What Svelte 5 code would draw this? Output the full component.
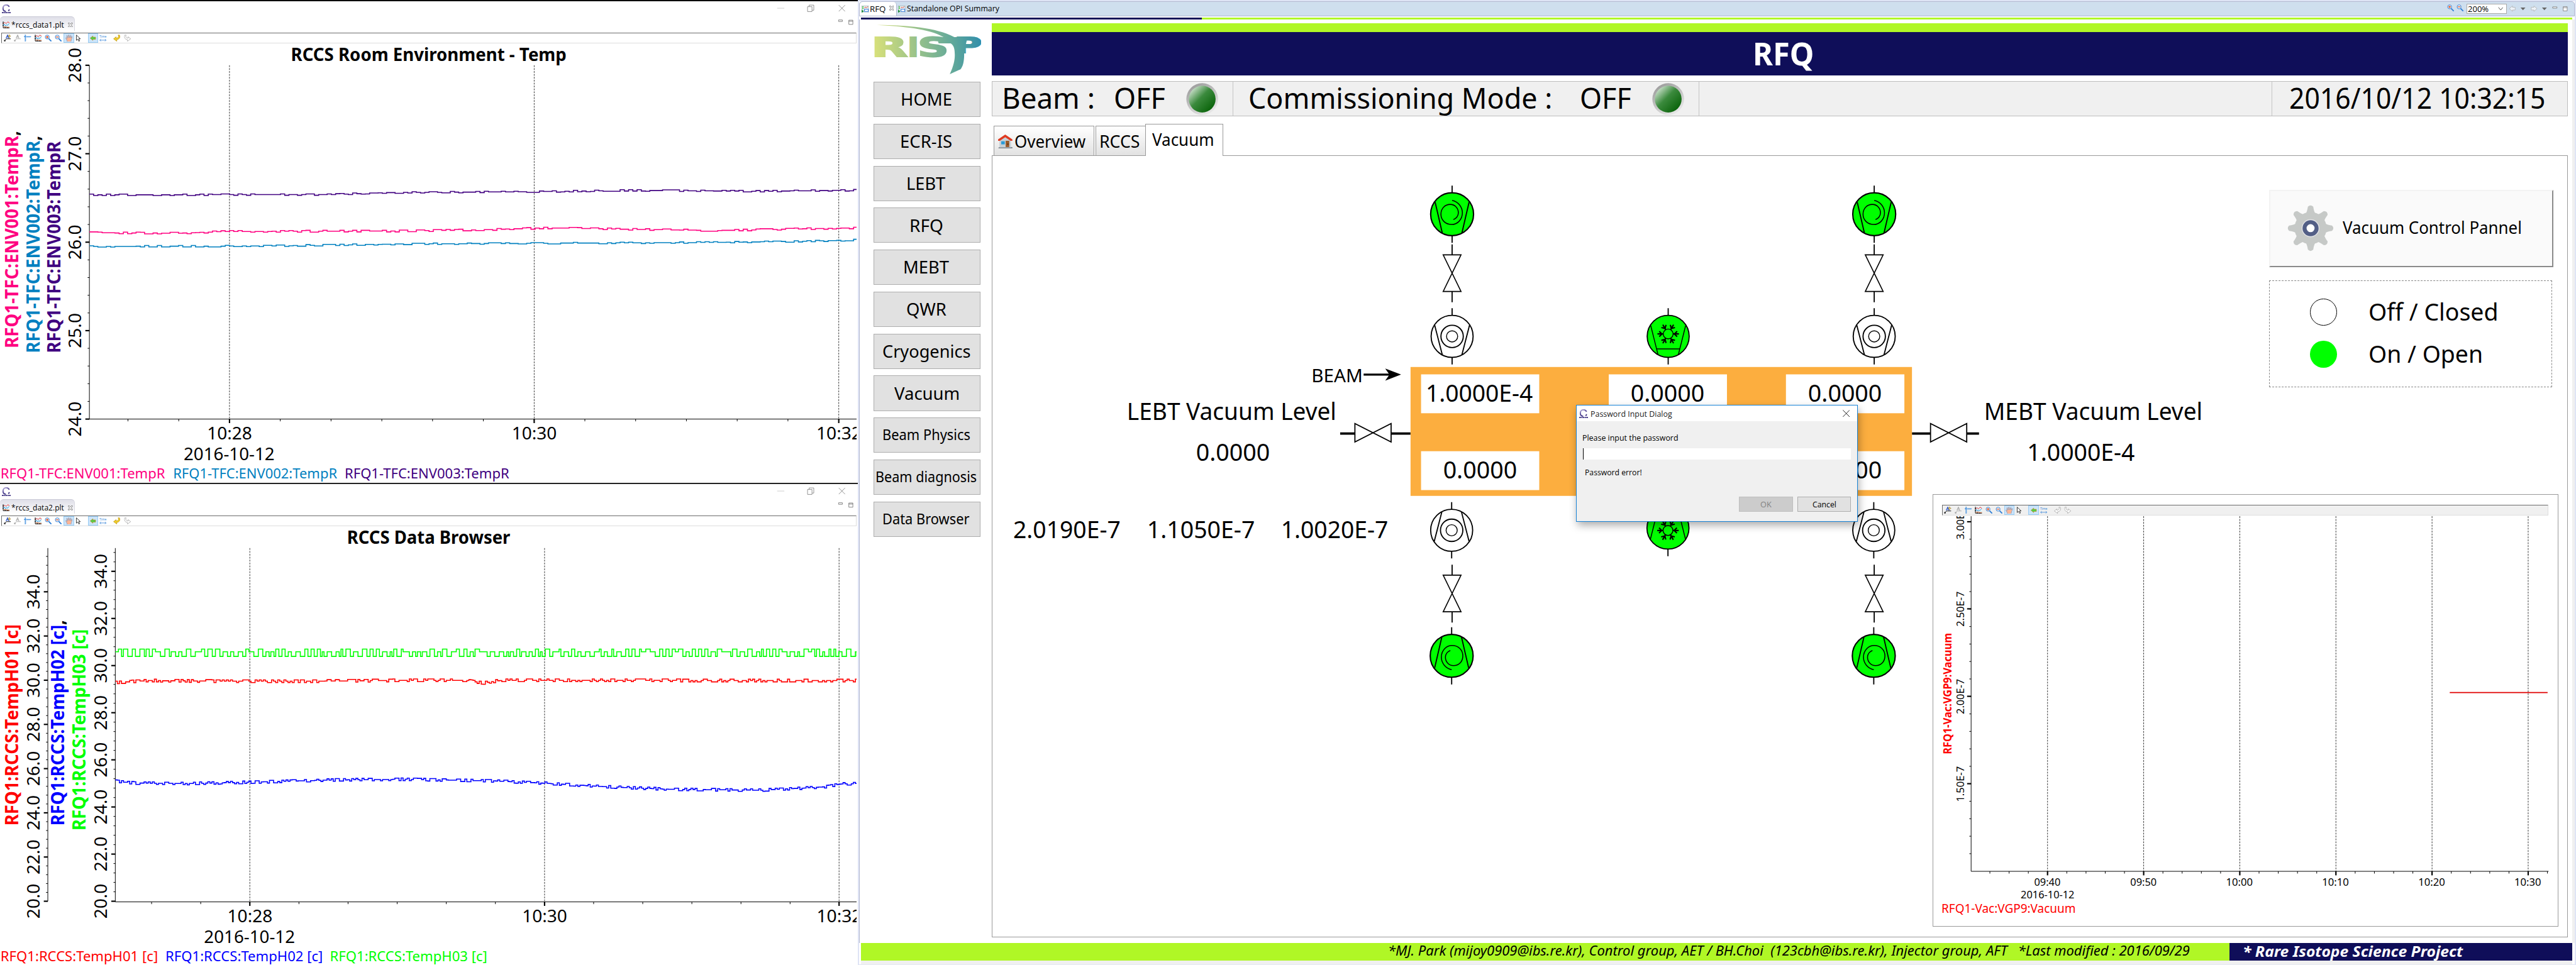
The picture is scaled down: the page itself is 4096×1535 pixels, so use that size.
<script>
  // Scales a label's glyphs horizontally so that its ink covers the width w.
  function fit(node, opts) {
    const cs = getComputedStyle(node);
    const ctx = document.createElement('canvas').getContext('2d');
    ctx.font = `${cs.fontStyle} ${cs.fontWeight} 100px ${cs.fontFamily}`;
    const m = ctx.measureText(node.textContent);
    const k = opts.size / 100;
    const ink = (m.actualBoundingBoxLeft + m.actualBoundingBoxRight) * k;
    const ratio = opts.w / ink;
    const left = m.actualBoundingBoxLeft * k * ratio;
    node.style.fontSize = `${opts.size}px`;
    if (opts.x === undefined) {
      node.style.transformOrigin = '0 50%';
      node.style.transform = `scaleX(${ratio})`;
      node.style.marginLeft = `${left}px`;
      node.style.marginRight = `${opts.w - m.width * k - left}px`;
    } else {
      node.setAttribute('x', String(opts.x + left));
      node.setAttribute('textLength', String(m.width * k * ratio));
      node.setAttribute('lengthAdjust', 'spacingAndGlyphs');
    }
  }

  function rng(seed) {
    let s = seed;
    return () => {
      s = (s * 1664525 + 1013904223) % 4294967296;
      return s / 4294967296;
    };
  }

  // Stepped trace through control points, with jitter in whole quanta.
  function trace(points, step, quantum, spread, seed, x1 = 1917) {
    const r = rng(seed);
    let x = points[0][0];
    let d = '';
    let i = 0;
    while (x < x1) {
      while (i < points.length - 2 && points[i + 1][0] < x) i++;
      const [ax, ay] = points[i];
      const [bx, by] = points[i + 1];
      const base = ay + ((by - ay) * (x - ax)) / (bx - ax);
      const j = Math.round((r() * 2 - 1) * spread) * quantum;
      const y = Math.round((base + j) * 2) / 2;
      d += d ? `V${y}` : `M${x} ${y}`;
      x = Math.min(x + step, x1);
      d += `H${x}`;
    }
    return d;
  }

  function square(x0, x1, levels, seed) {
    const r = rng(seed);
    let x = x0;
    let hi = false;
    let d = `M${x0} ${levels[1]}`;
    while (x < x1) {
      x = Math.min(x + (r() < 0.6 ? 7 : r() < 0.6 ? 10 : 4), x1);
      hi = !hi;
      const y = hi ? (r() < 0.55 ? levels[0] : levels[1]) : r() < 0.85 ? levels[2] : levels[1];
      d += `H${x}V${y}`;
    }
    return d;
  }

  const range = (n) => Array.from({ length: n }, (_, i) => i);

  const env = {
    tab: '*rccs_data1.plt',
    title: 'RCCS Room Environment - Temp',
    titleX: 654,
    titleW: 612,
    axes: [{ x: 200, top: 147.4, bottom: 939, base: 939, minor: 39.6, labelX: 181, labels: ['24.0', '25.0', '26.0', '27.0', '28.0'] }],
    names: [
      { x: 41, y: 777, w: 481, s: 'RFQ1-TFC:ENV001:TempR', comma: true, c: '#ff0080' },
      { x: 88, y: 788, w: 481, s: 'RFQ1-TFC:ENV002:TempR', comma: true, c: '#0080c0' },
      { x: 135, y: 788, w: 471, s: 'RFQ1-TFC:ENV003:TempR', comma: false, c: '#400080' }
    ],
    x0: 200,
    major: [513.5, 1195.3, 1876.8],
    minor: 113.6,
    legend: [
      { x: 4, w: 365, s: 'RFQ1-TFC:ENV001:TempR', c: '#ff0080' },
      { x: 390, w: 364, s: 'RFQ1-TFC:ENV002:TempR', c: '#0080c0' },
      { x: 774, w: 365, s: 'RFQ1-TFC:ENV003:TempR', c: '#400080' }
    ],
    lines: [
      { c: '#400080', d: trace([[200, 437], [740, 436.5], [860, 432], [1195, 430], [1400, 427], [1700, 429], [1917, 426.5]], 9.5, 1.5, 1.1, 7) },
      { c: '#ff0080', d: trace([[200, 522], [400, 523], [500, 519], [900, 518], [1090, 515], [1220, 511], [1400, 514], [1600, 517], [1800, 513], [1917, 511]], 9.5, 1.8, 1.2, 21) },
      { c: '#0080c0', d: trace([[200, 552.5], [600, 551.5], [900, 547], [1200, 545.5], [1600, 543.5], [1800, 541], [1917, 538]], 9.5, 1.5, 1.1, 35) }
    ]
  };

  const data = {
    tab: '*rccs_data2.plt',
    title: 'RCCS Data Browser',
    titleX: 779.5,
    titleW: 362,
    axes: [
      { x: 107, top: 147, bottom: 937.5, base: 937.5, minor: 19.79, labelX: 88, labels: ['20.0', '22.0', '24.0', '26.0', '28.0', '30.0', '32.0', '34.0'] },
      { x: 258, top: 147, bottom: 939, base: 937.5, minor: 21.1, labelX: 239, labels: ['20.0', '22.0', '24.0', '26.0', '28.0', '30.0', '32.0', '34.0'] }
    ],
    names: [
      { x: 41, y: 765, w: 445, s: 'RFQ1:RCCS:TempH01 [c]', comma: false, c: '#ff0000' },
      { x: 144, y: 765, w: 455, s: 'RFQ1:RCCS:TempH02 [c]', comma: true, c: '#0000ff' },
      { x: 191, y: 776, w: 445, s: 'RFQ1:RCCS:TempH03 [c]', comma: false, c: '#00ff00' }
    ],
    x0: 258,
    major: [559, 1218.5, 1877.5],
    minor: 109.9,
    legend: [
      { x: 4, w: 347, s: 'RFQ1:RCCS:TempH01 [c]', c: '#ff0000' },
      { x: 373, w: 347, s: 'RFQ1:RCCS:TempH02 [c]', c: '#0000ff' },
      { x: 741, w: 347, s: 'RFQ1:RCCS:TempH03 [c]', c: '#00ff00' }
    ],
    lines: [
      { c: '#00ff00', d: square(258, 1917, [373, 379, 389.5], 11) },
      { c: '#ff0000', d: trace([[258, 448], [330, 443.5], [500, 445], [700, 445], [900, 443], [1040, 443], [1080, 449], [1120, 443], [1917, 443.5]], 4.6, 3, 1.2, 5) },
      { c: '#0000ff', d: trace([[258, 669], [300, 673], [420, 674], [560, 671], [750, 666], [900, 664.5], [1100, 668], [1220, 673.5], [1350, 681], [1500, 687], [1700, 689], [1800, 684], [1850, 681], [1880, 675], [1917, 674]], 4.6, 2.8, 1.1, 9) }
    ]
  };

  const nav = [
    { s: 'HOME', w: 110, f: 39.5 },
    { s: 'ECR-IS', w: 112, f: 39.5 },
    { s: 'LEBT', w: 84, f: 39.5 },
    { s: 'RFQ', w: 70, f: 39.5 },
    { s: 'MEBT', w: 99, f: 39.5 },
    { s: 'QWR', w: 87, f: 39.5 },
    { s: 'Cryogenics', w: 194, f: 39.5 },
    { s: 'Vacuum', w: 144, f: 39.5 },
    { s: 'Beam Physics', w: 193, f: 32.5 },
    { s: 'Beam diagnosis', w: 223, f: 32.5 },
    { s: 'Data Browser', w: 192, f: 32.5 }
  ];

  const vacTicks = ['09:40', '09:50', '10:00', '10:10', '10:20', '10:30'];
  const vacLevels = [
    { s: '2.50E-7', y: 1362.4 },
    { s: '2.00E-7', y: 1558.2 },
    { s: '1.50E-7', y: 1753.8 }
  ];
</script>

{#snippet txt(x, y, s, w, size, cls = '', fill = '#000')}
  <text {y} class={cls} {fill} use:fit={{ w, x, size }}>{s}</text>
{/snippet}

{#snippet vtxt(x, y, s, w, size, cls = '', fill = '#000', comma = false)}
  <text transform={`translate(${x} ${y}) rotate(-90)`} class={cls} {fill} use:fit={{ w, x: 0, size }}>{s}{#if comma}<tspan fill="#000">,</tspan>{/if}</text>
{/snippet}

{#snippet cssLogo()}
  <svg class="clogo" viewBox="0 0 20 20">
    <defs>
      <linearGradient id="cg" x1="0" y1="0" x2="0.5" y2="1">
        <stop offset="0" stop-color="#c3bce2" /><stop offset="0.5" stop-color="#5b4f9c" /><stop offset="1" stop-color="#3b2f80" />
      </linearGradient>
    </defs>
    <path d="M16.5 5.5C15 2 12.500 1 10 1C5.500 1 2.500 4 2.500 8.500C2.500 12.500 5 15.500 9 15.700M14.500 14.500L17 11.500" fill="none" stroke="url(#cg)" stroke-width="2.600" />
    <path d="M0 18.500H20" stroke="#3b2f80" stroke-width="2.600" stroke-dasharray="4 .8 2.500 .6" />
  </svg>
{/snippet}

{#snippet pltIcon()}
  <svg class="i16" viewBox="0 0 16 16">
    <rect x="1" y="1" width="15" height="13" fill="#dff6fb" />
    <path d="M1.500 0V14.500H16M0 4H3M0 9H3M6 13V16M11 13V16" stroke="#000" stroke-width="1.300" fill="none" />
    <path d="M2 5L5 2L8 5L12 1L16 4" stroke="#f00" fill="none" stroke-width="1.200" />
    <path d="M2 9L4 6.500L7 10L9 7.500L11 9L15 5" stroke="#1a7fd0" fill="none" stroke-width="1.200" />
    <path d="M2 12.500L7 12L11 13H16" stroke="#e05a20" fill="none" stroke-width="1.300" />
  </svg>
{/snippet}

{#snippet magnifier(plus)}
  <svg class="i16" viewBox="0 0 16 16">
    <path d="M9 9L15 15" stroke="#2f7fd6" stroke-width="2.600" />
    <circle cx="5.800" cy="5.500" r="4.500" fill="#e3f2ff" stroke="#3a7fd0" stroke-width="1.300" />
    <path d={plus ? 'M3 5.500H8.600M5.800 2.700V8.300' : 'M3 5.500H8.600'} stroke="#e8501c" stroke-width="1.700" />
  </svg>
{/snippet}

{#snippet annotate(live)}
  <svg class="i16" viewBox="0 0 16 16">
    <path d="M2 13.500L6 9.500H16" stroke={live ? '#000' : '#aaa'} fill="none" stroke-width="1.300" />
    <circle cx="2.200" cy="13.600" r="1.900" fill={live ? '#333' : '#aaa'} />
    <path d="M5 8.500L8.500 0.500L11.500 8.500M6.500 5.500H10.500" stroke={live ? '#1f4fd0' : '#aaa'} fill="none" stroke-width="1.500" />
    {#if live}<path d="M12.500 0L13.500 2.500L16 3.500L13.500 4.500L12.500 7L11.500 4.500L9 3.500L11.500 2.500Z" fill="#f6d878" stroke="#8a6a10" stroke-width=".8" />{/if}
  </svg>
{/snippet}

{#snippet undo(live, flip)}
  <svg class="i16" class:flip viewBox="0 0 16 16">
    <path d="M14 1C16 5 15 10 8 11.500V15L0.800 9.500L6.500 5V8C11 7.500 13 5 11 1Z" fill={live ? '#f2cf2a' : '#fff'} stroke={live ? '#b8900c' : '#999'} stroke-width="1" />
  </svg>
{/snippet}

{#snippet tools(live)}
  <span class="tool">{@render annotate(true)}</span>
  <span class="tool">{@render annotate(false)}</span>
  <span class="tool"><svg class="i16" viewBox="0 0 16 16"><path d="M3 0V16M0 4.500H16" stroke="#1a78d8" stroke-width="1.500" /><path d="M5 6.500H15M5 1V15" stroke="#bcd8f2" stroke-width="1" /></svg></span>
  <span class="tool">{@render pltIcon()}</span>
  <span class="tool">{@render magnifier(true)}</span>
  <span class="tool">{@render magnifier(false)}</span>
  <span class="tool on"><svg class="i16" viewBox="0 0 16 16"><path d="M4 16L3 12L0.500 8C0 7 1.500 6.500 2.500 7.500L4 9L2.500 3C2.500 1.500 4.200 1.500 4.600 3L6 7L6.500 1.500C6.500 0 8.500 0 8.600 1.500L9 7L11 2C11.500 .8 13 1.500 12.700 2.600L12 7.500L14 4.500C15 3.500 16 4.500 15.600 5.600L13.500 11L12.500 16Z" fill="#fdb595" stroke="#3f7fc0" stroke-width="1" stroke-dasharray="1.600 1" /></svg></span>
  <span class="tool"><svg class="i16" viewBox="0 0 16 16"><path d="M2 1V13L5 10.300L7.500 15L9.500 14L7.200 9.500H11Z" fill="#fff" stroke="#000" stroke-width="1.100" /></svg></span>
  <span class="tool on sep"><svg class="i16" viewBox="0 0 16 16"><path d="M2 8L8 3.200V5.800H14V10.600H8V13Z" fill="#52cf4a" stroke="#c08a20" stroke-width="1" /></svg></span>
  <span class="tool"><svg class="i16 loose" viewBox="0 0 16 16"><text x="0" y="6.500" class="time" textLength="16" lengthAdjust="spacingAndGlyphs">Time</text><path d="M1 12.500H15M3.500 10L1 12.500L3.500 15M12.500 10L15 12.500L12.500 15" stroke="#2f7fd6" fill="none" stroke-width="1.100" /></svg></span>
  <span class="tool sep">{@render undo(live, false)}</span>
  <span class="tool">{@render undo(false, true)}</span>
{/snippet}

{#snippet closeX()}
  <svg class="closex" viewBox="0 0 11 11"><path d="M1 0.800H3.200L5.500 3.500L7.800 0.800H10V2.500L7.300 5.500L10 8.500V10.200H7.800L5.500 7.500L3.200 10.200H1V8.500L3.700 5.500L1 2.500Z" fill="#fff" stroke="#555" stroke-width="1" /></svg>
{/snippet}

{#snippet plotWindow(p)}
  <section class="win">
    <header class="wtitle">
      {@render cssLogo()}
      <svg class="wctl" viewBox="0 0 160 20" fill="none">
        <path d="M1 10H17" stroke="#bbb" />
        <path d="M69 6.500H79V17.500H69ZM72.500 6V3H83V14.500H79.500" stroke="#777" stroke-width="1.100" />
        <path d="M139 3L153 17M153 3L139 17" stroke="#777" stroke-width="1.100" />
      </svg>
    </header>
    <div class="wtabs">
      <div class="wtab">{@render pltIcon()}<span class="ui" use:fit={{ w: 117, size: 19 }}>{p.tab}</span>{@render closeX()}</div>
      <svg class="vctl" viewBox="0 0 36 14" fill="none" stroke="#555">
        <path d="M.5 1H9V4.500H.5ZM23.500 1.500H32.500V11H23.500ZM23.500 4H32.500" />
      </svg>
    </div>
    <div class="tools">{@render tools(true)}</div>
    <svg class="plot" viewBox="0 98 1917 981">
      {@render txt(p.titleX, 137, p.title, p.titleW, 39, 'b')}
      {#each p.major as x}
        <path d={`M${x} 147V939`} class="grid" />
      {/each}
      {#each p.axes as a}
        <path d={`M${a.x} ${a.top}V${a.bottom}`} class="axis" />
        {#each range(Math.floor((a.base - 146) / a.minor) + 1) as i}
          <path d={`M${a.x} ${a.base - i * a.minor}h-4`} class="minor" />
        {/each}
        {#each a.labels as s, i}
          <path d={`M${a.x} ${a.base - i * a.minor * 5}h-9`} class="major" />
          {@render vtxt(a.labelX, a.base - i * a.minor * 5 + 37.5, s, 75, 39)}
        {/each}
      {/each}
      {#each p.names as n}
        {@render vtxt(n.x, n.y, n.s, n.w, 39.5, 'b', n.c, n.comma)}
      {/each}
      <path d={`M${p.x0} 939H1917`} class="axis" />
      {#each range(16) as i}
        {#if p.major[0] + (i - 3) * p.minor > p.x0 && p.major[0] + (i - 3) * p.minor < 1917}
          <path d={`M${p.major[0] + (i - 3) * p.minor} 939v5`} class="minor" />
        {/if}
      {/each}
      {#each p.major as x, i}
        <path d={`M${x} 939v9`} class="major" />
        {@render txt(x - 47, 985, ['10:28', '10:30', '10:32'][i], 96, 39)}
      {/each}
      {@render txt(p.major[0] - 101, 1031, '2016-10-12', 200, 39)}
      {#each p.legend as l}
        {@render txt(l.x, 1072.5, l.s, l.w, 31, '', l.c)}
      {/each}
      {#each p.lines as l}
        <path d={l.d} fill="none" stroke={l.c} stroke-width="2.200" />
      {/each}
    </svg>
  </section>
{/snippet}

{#snippet scrollPump(x, y, rot, top, bottom)}
  <g transform={`translate(${x} ${y}) rotate(${rot})`} class="sym">
    <path d={`M0 ${-top}V-48M0 48V${bottom}`} />
    <circle r="48" fill="#0f0" stroke-width="3" />
    <path d="M-38 -27L-22 42M38 -27L22 42" />
    <path d="M0 -31C14 -28 23 -16 23 -3C23 12 12 23 -1 23C-15 23 -25 13 -25 0C-25 -13 -16 -22 -4 -22C6 -22 14 -14 14 -3C14 4 9 10 3 12" stroke-width="2.200" />
  </g>
{/snippet}

{#snippet turboPump(x, y, rot)}
  <g transform={`translate(${x} ${y}) rotate(${rot})`} class="sym">
    <path d="M0 -63V-47M0 47V63" />
    <circle r="47" fill="#fff" />
    <path d="M-39 -25L-22 41M39 -25L22 41" />
    <circle r="25" /><circle r="12.500" stroke-width="2" />
  </g>
{/snippet}

{#snippet cryoPump(x, y, rot)}
  <g transform={`translate(${x} ${y}) rotate(${rot})`} class="sym">
    <path d="M0 -63V-47M0 47V63" />
    <circle r="47" fill="#0f0" />
    <path d="M-39 -24L-23 40M39 -24L23 40M-26 28H26" stroke-width="2" />
    <g transform="translate(0 -5.500)">
      <circle r="11" stroke-width="2" />
      {#each range(6) as i}
        <path transform={`rotate(${i * 60})`} d="M11 0H24M20 -6L14 0L20 6" stroke-width="3" />
      {/each}
    </g>
  </g>
{/snippet}

{#snippet valve(x, y)}
  <g transform={`translate(${x} ${y})`} class="sym">
    <path d="M0 -64.500V-41M0 41V65" />
    <path d="M-20 -41H20L-20 41H20Z" fill="#fff" stroke-width="2.300" />
  </g>
{/snippet}

{#snippet opiIcon()}
  <svg class="i16" viewBox="0 0 16 16">
    <rect x=".5" y=".5" width="15" height="15" fill="#eef3f8" stroke="#9aa" />
    <path d="M6 6L8.500 3L10.500 5L14 2" stroke="#e0402a" fill="none" stroke-width="1.300" />
    <circle cx="3" cy="3" r="1.200" fill="#0b0" /><circle cx="3" cy="6.500" r="1.200" fill="#0b0" />
    <rect x="6.500" y="8" width="8.500" height="5" fill="#fff" stroke="#1f6fd8" stroke-width="1.300" />
    <path d="M0 9L5.500 12.500L0 16Z" fill="#1c8a3c" />
  </svg>
{/snippet}

{#snippet led()}
  <svg class="led" viewBox="-36 -36 72 72">
    <defs>
      <linearGradient id="rim" x1=".2" y1="0" x2=".8" y2="1"><stop offset="0" stop-color="#9a9a9a" /><stop offset="1" stop-color="#ededed" /></linearGradient>
      <linearGradient id="bulb" x1=".12" y1=".12" x2=".85" y2=".85"><stop offset="0" stop-color="#c9dfca" /><stop offset=".45" stop-color="#3b8a3d" /><stop offset="1" stop-color="#0c650c" /></linearGradient>
    </defs>
    <circle r="35.500" fill="url(#rim)" /><circle r="30" fill="url(#bulb)" />
  </svg>
{/snippet}

<div class="screen">
  <div class="left">
    {@render plotWindow(env)}
    {@render plotWindow(data)}
  </div>

  <main class="opi">
    <div class="tabbar">
      <div class="etab active">{@render opiIcon()}<span class="ui" use:fit={{ w: 33, size: 19 }}>RFQ</span>{@render closeX()}</div>
      <div class="etab">{@render opiIcon()}<span class="ui" use:fit={{ w: 206, size: 19 }}>Standalone OPI Summary</span></div>
      <div class="etools">
        <span class="zm">{@render magnifier(true)}</span>
        <span class="zm">{@render magnifier(false)}</span>
        <div class="combo"><span class="ui" use:fit={{ w: 45, size: 18 }}>200%</span><svg viewBox="0 0 12 8"><path d="M1 1L6 7L11 1" fill="none" stroke="#444" stroke-width="1.300" /></svg></div>
        <svg class="nav-arrows" viewBox="5616 6 136 20" fill="#eef3f8" stroke="#aaa">
          <path d="M5616 15.500L5623 9.500V12.500H5629V18.500H5623V21.500ZM5678 15.500L5671 9.500V12.500H5665V18.500H5671V21.500Z" />
          <path d="M5641 13H5652L5646.500 19ZM5689 13H5700L5694.500 19Z" fill="#666" stroke="none" />
          <path d="M5713 11.500H5722.500V14.500H5713ZM5736.500 11H5745.500V20.500H5736.500ZM5736.500 13.500H5745.500" fill="#fff" stroke="#666" />
        </svg>
      </div>
    </div>
    <div class="progress"><span></span></div>

    <div class="body">
      <nav class="side">
        <svg class="risp" viewBox="1953 52 242 116">
          <defs>
            <linearGradient id="rg" gradientUnits="userSpaceOnUse" x1="1953" y1="105" x2="2193" y2="90">
              <stop offset="0" stop-color="#d9e17a" /><stop offset=".5" stop-color="#8abb8e" /><stop offset=".75" stop-color="#5fa79b" /><stop offset="1" stop-color="#338fa9" />
            </linearGradient>
          </defs>
          <g fill="url(#rg)" class="mark">
            <text x="1949" y="127" textLength="82" lengthAdjust="spacingAndGlyphs">R</text>
            <text x="2030" y="127" textLength="26" lengthAdjust="spacingAndGlyphs">I</text>
            <text x="2053" y="127" textLength="70" lengthAdjust="spacingAndGlyphs">S</text>
            <text x="2135" y="118" textLength="62" lengthAdjust="spacingAndGlyphs" class="p">P</text>
            <path d="M1962 56C2030 56 2095 62 2135 83H2165L2157 114C2158 135 2155 148 2149 155L2125 166C2135 145 2137 130 2136 118C2136 105 2131 99 2127 97H2100L2096 83H2111C2080 65 2020 59 1962 56Z" />
          </g>
        </svg>
        {#each nav as b}
          <button class="navb"><span use:fit={{ w: b.w, size: b.f }}>{b.s}</span></button>
        {/each}
      </nav>

      <div class="main">
        <div class="banner"><span use:fit={{ w: 128, size: 70 }}>RFQ</span></div>

        <div class="status">
          <div class="cell c1">
            <span class="cap1" use:fit={{ w: 198, size: 65 }}>Beam :</span>
            <div class="state-pair"><span use:fit={{ w: 110, size: 65 }}>OFF</span>{@render led()}</div>
          </div>
          <div class="cell c2">
            <span class="cap2" use:fit={{ w: 672, size: 65 }}>Commissioning Mode :</span>
            <div class="state-pair"><span use:fit={{ w: 110, size: 65 }}>OFF</span>{@render led()}</div>
          </div>
          <div class="cell c3"><span use:fit={{ w: 568, size: 65 }}>2016/10/12 10:32:15</span></div>
        </div>

        <div class="ptabs">
          <div class="ptab t1">
            <svg class="house" viewBox="0 0 32 32">
              <path d="M2 28H32V32H0Z" fill="#7d8790" /><path d="M3 13L16 4L29 13V29H3Z" fill="#c7d0d6" />
              <path d="M16 0L32 11V14H28L16 6L4 14H0V11Z" fill="#e03a20" />
              <rect x="7" y="15" width="8" height="7" fill="#2a9bd8" /><rect x="17" y="14" width="8" height="14" fill="#9a5a2a" /><rect x="21" y="20" width="2" height="3" fill="#4a2a10" />
            </svg>
            <span use:fit={{ w: 157, size: 38.5 }}>Overview</span>
          </div>
          <div class="ptab t2"><span use:fit={{ w: 86, size: 38.5 }}>RCCS</span></div>
          <div class="ptab t3"><span use:fit={{ w: 136, size: 38.5 }}>Vacuum</span></div>
        </div>

        <div class="panel">
          <svg class="synoptic" viewBox="2219 348 2840 1300">
            {@render txt(2938, 854, 'BEAM', 107, 42)}
            <path d="M3051 837.500H3125" stroke="#000" stroke-width="4.500" />
            <path d="M3102 826L3132 837.500L3102 849L3110 837.500Z" fill="#000" stroke="#000" stroke-width="2" />
            {@render txt(2526, 938.5, 'LEBT Vacuum Level', 460, 54)}
            {@render txt(2678, 1030.500, '0.0000', 161, 54)}
            {@render txt(2269, 1203.500, '2.0190E-7', 236, 54)}
            {@render txt(2570.500, 1203.500, '1.1050E-7', 235, 54)}
            {@render txt(2870, 1203.500, '1.0020E-7', 234, 54)}
            <path d="M2998.500 969.500H3031M3112.500 969.500H3156M4278 969.500H4319M4401 969.500H4428" stroke="#000" stroke-width="5" />
            <path d="M3031.500 947V988.500L3112.500 947V988.500ZM4319.500 947V988.500L4400.500 947V988.500Z" fill="#fff" stroke="#000" stroke-width="2.500" />
            {@render txt(4444, 938.500, 'MEBT Vacuum Level', 480, 54)}
            {@render txt(4540, 1030.500, '1.0000E-4', 236, 54)}

            <rect x="3156" y="820.500" width="1122" height="288.500" fill="#fcae3f" />
            <g fill="#fff">
              <rect x="3179.500" y="837" width="264.500" height="87" /><rect x="3599.500" y="837" width="264.500" height="87" /><rect x="3996" y="837" width="265" height="87" />
              <rect x="3179.500" y="1009" width="264.500" height="87" /><rect x="3996" y="1009" width="265" height="87" />
            </g>
            {@render txt(3194, 898, '1.0000E-4', 235, 54)}
            {@render txt(3650.500, 898, '0.0000', 161, 54)}
            {@render txt(4047.500, 898, '0.0000', 161, 54)}
            {@render txt(3231, 1070, '0.0000', 161, 54)}
            {@render txt(4047.500, 1070, '0.0000', 161, 54)}

            {#each [3249, 4193.500] as cx}
              {@render scrollPump(cx, 478.500, 0, 64, 64)}
              {@render valve(cx, 610.500)}
              {@render turboPump(cx, 752, 0)}
              {@render turboPump(cx - 1, 1186, 180)}
              {@render valve(cx, 1327.500)}
              {@render scrollPump(cx - 1, 1467, 180, 64, 64)}
            {/each}
            {@render cryoPump(3732.500, 752, 0)}
            {@render cryoPump(3732, 1181, 180)}
          </svg>

          <button class="vacbtn">
            <svg class="gear" viewBox="-52 -52 104 104">
              {#each range(8) as i}
                <path transform={`rotate(${i * 45})`} d="M-12 -30C-8 -36 -7 -42 -6 -48Q0 -54 6 -48C7 -42 8 -36 12 -30Z" fill="#c6c9c7" />
              {/each}
              <circle r="36" fill="#c6c9c7" /><circle r="20" fill="#e3e3e6" /><circle r="13.500" fill="#fff" stroke="#535f86" stroke-width="9" />
            </svg>
            <span use:fit={{ w: 398, size: 38 }}>Vacuum Control Pannel</span>
          </button>

          <div class="states">
            <div class="state"><i class="dot"></i><span use:fit={{ w: 283, size: 54 }}>Off / Closed</span></div>
            <div class="state"><i class="dot lit"></i><span use:fit={{ w: 249, size: 54 }}>On / Open</span></div>
          </div>

          <div class="vplot">
            <div class="tools grey">{@render tools(false)}</div>
            <svg class="vsvg" viewBox="4347 1153.500 1360 900">
              {#each vacTicks as s, i}
                <path d={`M${4583 + i * 215.1} 1155V1950`} class="grid" />
                <path d={`M${4583 + i * 215.1} 1950v9`} class="major" />
                {@render txt(4554 + i * 215.1, 1982, s, 57, 23.5)}
              {/each}
              {#each range(30) as i}
                <path d={`M${4454 + i * 43.02} 1950v5`} class="minor" />
              {/each}
              {#each range(20) as i}
                <path d={`M4412 ${1910.500 - i * 39.11}h-4`} class="minor" />
              {/each}
              <path d="M4412 1155V1950H5704" class="axis" fill="none" />
              <path d="M4412 1167.500h-9" class="major" />
              <svg x="4370" y="1155" width="30" height="60" viewBox="4370 1155 30 60">
                {@render vtxt(4396, 1206.500, '3.00E-7', 77, 24)}
              </svg>
              {#each vacLevels as l}
                <path d={`M4412 ${l.y}h-9`} class="major" />
                {@render vtxt(4396, l.y + 39, l.s, 77, 24)}
              {/each}
              {@render vtxt(4368, 1686, 'RFQ1-Vac:VGP9:Vacuum', 268, 24, 'b', '#f00')}
              <path d="M5483 1549.700H5702" stroke="#e00000" stroke-width="2.500" />
              {@render txt(4524, 2010, '2016-10-12', 118, 23.5)}
              {@render txt(4348, 2042.500, 'RFQ1-Vac:VGP9:Vacuum', 296, 28, '', '#f00')}
            </svg>
          </div>
        </div>
      </div>
    </div>

    <footer class="foot">
      <div class="credit"><span use:fit={{ w: 1792, size: 30 }}>*MJ. Park (mijoy0909@ibs.re.kr), Control group, AET / BH.Choi  (123cbh@ibs.re.kr), Injector group, AFT   *Last modified : 2016/09/29</span></div>
      <div class="project"><span use:fit={{ w: 491, size: 32 }}>* Rare Isotope Science Project</span></div>
    </footer>
  </main>

  <div class="dialog">
    <header>
      {@render cssLogo()}
      <span class="ui" use:fit={{ w: 181, size: 18.5 }}>Password Input Dialog</span>
      <svg class="dx" viewBox="0 0 16 16"><path d="M.5 .5L15.500 15.500M15.500 .5L.5 15.500" stroke="#000" stroke-width="1.200" /></svg>
    </header>
    <p class="ask"><span class="ui" use:fit={{ w: 212, size: 18.5 }}>Please input the password</span></p>
    <div class="field"></div>
    <p class="err"><span class="ui" use:fit={{ w: 125, size: 18.5 }}>Password error!</span></p>
    <div class="btns">
      <button class="dbtn off"><span class="ui" use:fit={{ w: 24, size: 18.5 }}>OK</span></button>
      <button class="dbtn"><span class="ui" use:fit={{ w: 51, size: 18.5 }}>Cancel</span></button>
    </div>
  </div>
</div>

<style>
  :global(html), :global(body) { margin: 0; overflow: hidden; background: #fff; }
  .screen {
    position: relative;
    display: flex;
    width: 5764px;
    height: 2160px;
    zoom: 0.71062;
    overflow: hidden;
    background: #fff;
    color: #000;
    font-family: "Noto Sans", "Open Sans", sans-serif;
    line-height: 1;
  }
  span { white-space: pre; display: inline-block; }
  svg { display: block; flex: none; }
  button { font-family: inherit; color: inherit; padding: 0; margin: 0; border-radius: 0; line-height: 1; }
  .b { font-weight: 700; }
  text { white-space: pre; }
  .ui { font-family: "Open Sans", "Noto Sans", sans-serif; }
  .grid { stroke: #000; stroke-width: 1.1; stroke-dasharray: 4 2.5; fill: none; }
  .axis { stroke: #000; stroke-width: 1.4; fill: none; }
  .minor { stroke: #000; stroke-width: 1.4; }
  .major { stroke: #000; stroke-width: 3; }
  .i16 { width: 16px; height: 16px; }
  .loose { overflow: visible; }
  .flip { transform: scaleX(-1); }
  .time { font: 8px "Open Sans", sans-serif; fill: #2f7fd6; }
  .closex { width: 11px; height: 11px; }
  .clogo { width: 20px; height: 20px; }

  .left { width: 1920px; flex: none; display: flex; flex-direction: column; }
  .win { height: 1080px; box-sizing: border-box; border-top: 4px solid #000; display: flex; flex-direction: column; flex: none; }
  .win + .win { border-top: 3px solid #222; margin-top: 1px; height: 1079px; }
  .wtitle { height: 34px; display: flex; justify-content: space-between; align-items: flex-start; padding: 7px 22px 0 4px; box-sizing: border-box; }
  .wctl { width: 160px; height: 20px; margin-top: -1px; }
  .wtabs { height: 36px; display: flex; justify-content: space-between; align-items: flex-start; padding-right: 8px; }
  .wtab { display: flex; align-items: center; width: 168px; height: 32px; box-sizing: border-box; padding: 4px 0 0 5px; gap: 5px; border-top: 1px solid #c9c9d6; border-right: 1px solid #d9d9e2; border-radius: 8px 8px 0 0; background: linear-gradient(#dfdfe8, #fff); }
  .wtab .closex { margin-left: 4px; }
  .vctl { width: 36px; height: 14px; margin-top: 7px; }
  .tools { margin-left: 3px; width: 1914px; height: 24px; box-sizing: border-box; border-top: 2px solid #6b6b6b; border-left: 2px solid #6b6b6b; border-right: 1px solid #ddd; border-bottom: 1px solid #ddd; display: flex; align-items: center; background: #fff; }
  .tool { width: 23px; height: 21px; box-sizing: border-box; display: flex; align-items: center; justify-content: center; }
  .tool.on { background: #cce4f9; border: 1px solid #99cdf5; }
  .tool.sep { margin-left: 8px; }
  .plot { width: 1917px; height: 981px; }

  .opi { flex: 1; min-width: 0; box-sizing: border-box; height: 2160px; border-left: 3px solid #dfe4f5; border-right: 3px solid #dfe4f5; border-bottom: 2px solid #dfe4f5; padding-top: 3px; background: linear-gradient(#dfe4f5, #dfe4f5) top / 100% 3px no-repeat; display: flex; flex-direction: column; }
  .tabbar { height: 34px; box-sizing: border-box; flex: none; border: 1px solid #b2b8d0; border-radius: 7px 7px 0 0; background: #cfdfee; display: flex; overflow: hidden; }
  .etab { display: flex; align-items: center; gap: 4px; padding-left: 4px; }
  .etab.active { width: 82px; box-sizing: border-box; background: #fff; border-right: 1px solid #b2b8d0; border-radius: 7px 7px 0 0; margin-bottom: -1px; }
  .etab.active .closex { margin-left: 4px; margin-bottom: 4px; }
  .etools { margin-left: auto; display: flex; align-items: center; gap: 6px; padding-right: 9px; }
  .zm { width: 16px; height: 16px; margin-bottom: 3px; }
  .combo { width: 90px; height: 23px; box-sizing: border-box; background: #fff; border: 1px solid #aaa; display: flex; align-items: center; justify-content: space-between; padding: 0 6px 0 3px; }
  .combo svg { width: 12px; height: 8px; }
  .nav-arrows { width: 136px; height: 20px; margin-bottom: 1px; }
  .progress { height: 4px; margin: 2px 5px 0 3px; background: #b0f726; flex: none; }
  .progress span { display: block; width: 763px; height: 4px; background: #0f0e59; }

  .body { display: flex; height: 2068px; flex: none; box-sizing: border-box; border-left: 1px solid #b2b8d0; border-right: 6px solid #f0f0f0; }
  .side { width: 295px; padding-left: 29px; box-sizing: border-box; display: flex; flex-direction: column; gap: 15px; flex: none; padding-top: 9px; }
  .risp { width: 242px; height: 116px; }
  .mark text { font: 700 60px "DejaVu Sans", sans-serif; stroke: url(#rg); stroke-width: 2.5; }
  .mark .p { font-size: 47px; }
  .navb { width: 239px; height: 79px; box-sizing: border-box; border: 1px solid #adadad; background: #e1e1e1; display: flex; align-items: center; justify-content: center; flex: none; margin-left: 1px; }
  .navb span { margin-top: -2px; }

  .main { width: 3527px; display: flex; flex-direction: column; padding-top: 9px; }
  .banner { height: 117px; box-sizing: border-box; border-top: 20px solid #b0f726; background: #0f0e59; color: #fff; font-weight: 700; display: flex; align-items: center; justify-content: center; flex: none; padding-left: 18px; }
  .status { margin-top: 13px; height: 79px; box-sizing: border-box; border: 1px solid #bdbdbd; background: #f0f0f0; display: flex; flex: none; }
  .cell { display: flex; align-items: center; box-sizing: border-box; border-right: 1px solid #c4c4c4; }
  .cell span { margin-top: -3px; }
  .state-pair { display: flex; align-items: center; gap: 48px; }
  .c1 { width: 539px; padding-left: 27px; gap: 50px; }
  .c2 { width: 1043px; padding-left: 38px; gap: 69px; }
  .c3 { margin-left: auto; width: 662px; padding-left: 41px; border-left: 1px solid #c4c4c4; border-right: 0; }
  .led { width: 72px; height: 72px; }

  .ptabs { margin-top: 17px; height: 70px; display: flex; align-items: flex-end; padding-left: 4px; flex: none; }
  .ptab { height: 66px; box-sizing: border-box; border: 1px solid #999; border-bottom: 0; background: linear-gradient(#fff, #e2e2e2); display: flex; align-items: center; }
  .t1 { width: 225px; padding-left: 9px; gap: 6px; }
  .t2 { width: 112px; margin-left: 3px; padding-left: 10px; border-right: 0; }
  .t3 { width: 174px; height: 72px; background: #fff; padding-left: 13px; padding-bottom: 4px; margin-bottom: -1px; z-index: 1; }
  .house { width: 32px; height: 32px; margin-top: 2px; }

  .panel { position: relative; height: 1750px; box-sizing: border-box; border: 1px solid #999; background: #fff; display: flex; flex-direction: column; align-items: flex-end; padding: 75px 20px 0 0; flex: none; }
  .synoptic { position: absolute; left: -1px; top: -1px; width: 2840px; height: 1300px; }
  .sym { stroke: #000; stroke-width: 2.6; fill: none; }
  .vacbtn { position: relative; width: 636px; height: 174px; box-sizing: border-box; background: #fafafa; border: 4px solid; border-color: #f3f3f3 #8a8a8a #8a8a8a #f3f3f3; display: flex; align-items: center; padding-left: 37px; gap: 20px; margin-right: 11px; flex: none; }
  .vacbtn span { margin-top: -5px; }
  .gear { width: 104px; height: 104px; }
  .states { position: relative; width: 634px; height: 239px; box-sizing: border-box; margin: 29px 14px 0 0; border: 1px dashed #888; display: flex; flex-direction: column; justify-content: center; gap: 35px; padding: 0 0 2px 92px; flex: none; }
  .state { display: flex; align-items: center; height: 60px; gap: 74px; }
  .state span { margin-top: -3px; }
  .dot { width: 60px; height: 60px; box-sizing: border-box; border-radius: 50%; border: 2px solid #000; background: #fff; margin-left: -1px; }
  .dot.lit { background: #0f0; border: 0; }
  .vplot { position: relative; width: 1401px; height: 968px; box-sizing: border-box; margin-top: 240px; border: 2px solid #999; padding: 22px 0 0 20px; flex: none; }
  .tools.grey { margin-left: 0; width: 1357px; height: 25px; background: #f0f0f0; }
  .vsvg { width: 1360px; height: 900px; }

  .foot { height: 39px; margin-right: 6px; margin-left: 3px; display: flex; color: #000; flex: none; font-style: italic; box-shadow: 0 9px 0 #f0f0f0; }
  .credit { width: 3063px; background: #b0f726; display: flex; align-items: center; justify-content: flex-end; padding-right: 90px; box-sizing: border-box; }
  .credit span { margin-top: -5px; }
  .project { flex: 1; background: #0f0e59; color: #fff; font-weight: 700; display: flex; align-items: center; padding-left: 32px; }
  .project span { margin-top: 2px; }

  .dialog { position: absolute; left: 3527px; top: 906px; width: 630px; height: 262px; box-sizing: border-box; border: 1.500px solid #1883d7; background: #f0f0f0; box-shadow: 3px 8px 18px rgba(0, 0, 0, .35); }
  .dialog header { height: 36px; background: #fff; display: flex; align-items: center; padding: 2px 17px 0 5px; gap: 7px; box-sizing: border-box; color: #222; }
  .dx { width: 16px; height: 16px; margin-left: auto; margin-bottom: 1px; }
  .dialog p { margin: 0; height: 20px; display: flex; align-items: center; }
  .ask { padding: 27px 0 0 14px; }
  .dialog .ask { padding: 27px 0 0 14px; }
  .field { margin: 13px 14px 0 14px; height: 25px; background: #fff; border-left: 1.500px solid #000; box-sizing: border-box; }
  .dialog .err { padding: 19px 0 0 19px; }
  .btns { display: flex; justify-content: flex-end; gap: 10px; padding: 45px 14px 0 0; }
  .dbtn { width: 120px; height: 33px; box-sizing: border-box; border: 1.500px solid #adadad; background: #e1e1e1; display: flex; align-items: center; justify-content: center; }
  .dbtn.off { background: #ccc; border-color: #bfbfbf; color: #838383; }
</style>
